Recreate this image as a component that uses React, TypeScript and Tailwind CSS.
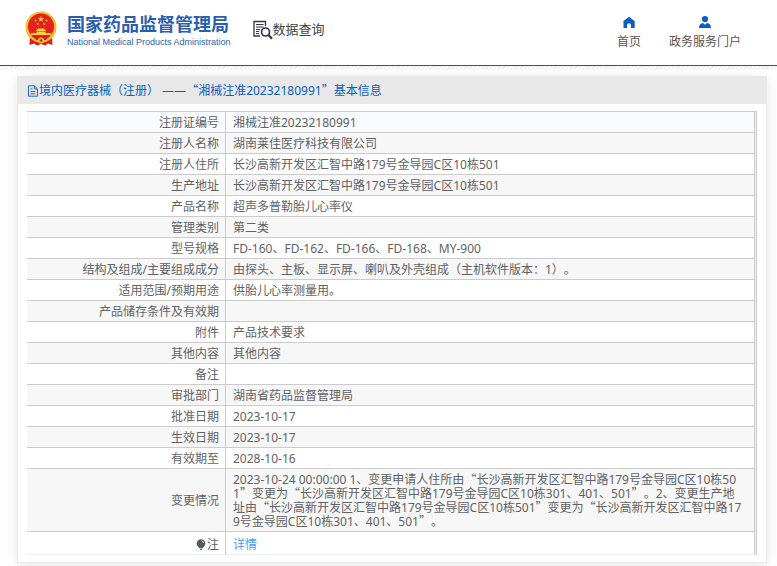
import type { ReactNode } from 'react';

interface InfoRow {
  label: string;
  value: string;
}

const rows: InfoRow[] = [
  { label: '注册证编号', value: '湘械注准20232180991' },
  { label: '注册人名称', value: '湖南莱佳医疗科技有限公司' },
  { label: '注册人住所', value: '长沙高新开发区汇智中路179号金导园C区10栋501' },
  { label: '生产地址', value: '长沙高新开发区汇智中路179号金导园C区10栋501' },
  { label: '产品名称', value: '超声多普勒胎儿心率仪' },
  { label: '管理类别', value: '第二类' },
  { label: '型号规格', value: 'FD-160、FD-162、FD-166、FD-168、MY-900' },
  { label: '结构及组成/主要组成成分', value: '由探头、主板、显示屏、喇叭及外壳组成（主机软件版本：1）。' },
  { label: '适用范围/预期用途', value: '供胎儿心率测量用。' },
  { label: '产品储存条件及有效期', value: '' },
  { label: '附件', value: '产品技术要求' },
  { label: '其他内容', value: '其他内容' },
  { label: '备注', value: '' },
  { label: '审批部门', value: '湖南省药品监督管理局' },
  { label: '批准日期', value: '2023-10-17' },
  { label: '生效日期', value: '2023-10-17' },
  { label: '有效期至', value: '2028-10-16' },
  {
    label: '变更情况',
    value:
      '2023-10-24 00:00:00 1、变更申请人住所由“长沙高新开发区汇智中路179号金导园C区10栋501”变更为“长沙高新开发区汇智中路179号金导园C区10栋301、401、501”。2、变更生产地址由“长沙高新开发区汇智中路179号金导园C区10栋501”变更为“长沙高新开发区汇智中路179号金导园C区10栋301、401、501”。',
  },
];

// Curly quotes are full width in Chinese text
function CjkText({ text }: { text: string }) {
  return (
    <>
      {text.split(/([“”]+)/).map((part, index) =>
        index % 2 === 1 ? (
          <span key={index} className="font-['Noto_Sans_CJK_SC',sans-serif] leading-[10px]">
            {part}
          </span>
        ) : (
          part
        )
      )}
    </>
  );
}

function Emblem() {
  return (
    <svg viewBox="0 0 32 35" className="h-[35px] w-8 shrink-0" aria-hidden="true">
      <path d="M5 24 L4.500 34 L9 32.500 L12 34.500 L16 33 L20 34.500 L23 32.500 L27.500 34 L27 24 Z" fill="#d8201c" />
      <circle cx="16" cy="16" r="15.500" fill="#edb52c" />
      <circle cx="16" cy="15.500" r="14.200" fill="none" stroke="#f7d95c" strokeWidth="0.800" strokeDasharray="2 1" />
      <circle cx="16" cy="15.500" r="13" fill="#e5211d" />
      <path d="M16 4.800 L16.800 7.200 H19.300 L17.300 8.700 L18 11.100 L16 9.600 L14 11.100 L14.700 8.700 L12.700 7.200 H15.200 Z" fill="#f8cf3c" />
      <g fill="#f8cf3c">
        <circle cx="10.500" cy="9.500" r="0.900" />
        <circle cx="21.500" cy="9.500" r="0.900" />
        <circle cx="12.700" cy="13" r="0.900" />
        <circle cx="19.300" cy="13" r="0.900" />
        <path d="M12 18.500 L13 17.500 H19 L20 18.500 L21 20 H11 Z" />
        <path d="M11.500 20.500 H20.500 V22 H26 V24 H6 V22 H11.500 Z" />
      </g>
      <path d="M7 25 H25 L22 29 H10 Z" fill="#d8201c" />
      <circle cx="16" cy="29.500" r="3" fill="#f0bd35" />
      <circle cx="16" cy="29.500" r="1.300" fill="#d8201c" />
      <path d="M5 26 Q10 27 12 31 M27 26 Q22 27 20 31" stroke="#f0bd35" strokeWidth="1.200" fill="none" />
    </svg>
  );
}

function QueryIcon() {
  return (
    <svg viewBox="0 0 20 20" className="h-5 w-5 shrink-0" fill="none" stroke="#33334a" aria-hidden="true">
      <path d="M12.500 6 V1.500 H1 V16 H7" strokeWidth="1.300" />
      <path d="M3 4.500 H10.500 M3 7 H10.500 M3 9.500 H7 M3 11.500 H6 M3 13.500 H6" strokeWidth="1" />
      <circle cx="12.500" cy="12" r="4" strokeWidth="1.700" />
      <path d="M15.500 15 L19 18.700" strokeWidth="2.200" />
    </svg>
  );
}

function HomeIcon() {
  return (
    <svg viewBox="0 0 12 12" className="h-3 w-3" fill="#0a5fc4" aria-hidden="true">
      <path d="M6 0.800 L11.500 5 Q12 5.500 11.700 6 V12 H8 V9 Q8 7.200 6 7.200 Q4 7.200 4 9 V12 H0.500 V6 Q0 5.500 0.500 5 Z" />
    </svg>
  );
}

function UserIcon() {
  return (
    <svg viewBox="0 0 12 12" className="h-3 w-3" fill="#0a5fc4" aria-hidden="true">
      <circle cx="6" cy="3.100" r="3.100" />
      <path d="M0 12 Q0 7.500 4 7.100 L6 8.700 L8 7.100 Q12 7.500 12 12 Z" />
    </svg>
  );
}

function DocumentIcon() {
  return (
    <svg viewBox="0 0 12 12" className="h-3 w-3 shrink-0" fill="none" stroke="#0a5fc4" strokeWidth="0.900" aria-hidden="true">
      <path d="M1.500 0.800 H7.300 L10.500 4 V11.200 H1.500 Z M7.300 0.800 V4 H10.500 M3.500 4 H5.500 M3.500 6.500 H8.500 M3.500 8.800 H8.500" />
    </svg>
  );
}

function BulbIcon() {
  return (
    <svg viewBox="0 0 10 12" className="h-3 w-2.5" aria-hidden="true">
      <circle cx="5" cy="4.500" r="4.300" fill="#55585c" />
      <path d="M2 7 H8 L6.800 9.200 H3.200 Z M4 10 H6 V11 H4 Z" fill="#55585c" />
      <path d="M5.500 1.800 Q7.300 2.200 7.700 4" stroke="#fff" strokeWidth="0.800" fill="none" />
    </svg>
  );
}

function NavLink({ icon, text }: { icon: ReactNode; text: string }) {
  return (
    <a href="#" className="flex flex-col items-center gap-[5px] text-xs leading-[18px] text-[#555]">
      {icon}
      {text}
    </a>
  );
}

export default function App() {
  return (
    <div
      lang="zh-CN"
      className="bg-white font-['Noto_Sans','Noto_Sans_CJK_SC',sans-serif] text-xs text-[#606266] [text-spacing-trim:space-all]"
    >
      {/* Header */}
      <header>
        <div className="flex h-[66px] items-start justify-between border-b border-[#1059ad] pr-9 pl-[25px]">
          <div className="flex">
            <a href="#" className="flex gap-[10px] pt-[11px]">
              <Emblem />
              <span className="flex flex-col text-[#2b5fae]">
                <span className="font-['Noto_Sans_CJK_SC',sans-serif] text-lg leading-[25px] font-bold">
                  国家药品监督管理局
                </span>
                <span className="font-['Liberation_Sans',sans-serif] text-[9px] leading-3">
                  National Medical Products Administration
                </span>
              </span>
            </a>
            <a href="#" className="ml-[22px] flex pt-5 text-[13px] leading-[18px] text-[#444]">
              <QueryIcon />
              {'数据查询'}
            </a>
          </div>
          <nav className="flex gap-7 pt-4">
            <NavLink icon={<HomeIcon />} text="首页" />
            <NavLink icon={<UserIcon />} text="政务服务门户" />
          </nav>
        </div>
        <div className="h-[3px] bg-[repeating-linear-gradient(135deg,#ebe8e8_0px,#ebe8e8_1px,#ffffff_1px,#ffffff_3px)]" />
      </header>

      {/* Registration details */}
      <main className="mt-[7px] mr-[10px] mb-1 ml-[17px] border border-[#e8e8ea] bg-white shadow-[0_2px_12px_rgba(0,0,0,0.1)]">
        <h1 className="flex h-[27px] items-center bg-[#e8e8e8] pl-[9px] text-xs text-[#0a5fc4]">
          <DocumentIcon />
          <span>
            <CjkText text="境内医疗器械（注册） ——“湘械注准20232180991”基本信息" />
          </span>
        </h1>
        <div className="px-[9px] pt-[7px] pb-[7px]">
          <div className="border-t border-r border-[#ccc] bg-[#ebeef5] pr-px">
            <table className="w-full table-fixed border-separate border-spacing-0 leading-[14px]">
              <colgroup>
                <col className="w-[199px]" />
                <col />
              </colgroup>
              <tbody>
                {rows.map((row, index) => (
                  <tr
                    key={row.label}
                    className={index === 0 ? 'bg-[#f8fafd]' : index % 2 === 1 ? 'bg-[#f7f7f7]' : 'bg-white'}
                  >
                    <th scope="row" className="border-r border-b border-[#ccc] px-[6px] pt-1 pb-[2px] text-right font-normal">
                      {row.label}
                    </th>
                    <td className="h-[21px] border-r border-b border-[#ccc] pt-1 pr-[11px] pb-[2px] pl-[7px] break-all">
                      <CjkText text={row.value} />
                    </td>
                  </tr>
                ))}
                <tr className="bg-white">
                  <th scope="row" className="border-r border-b border-r-[#ccc] border-b-[#ebeef5] px-[6px] pt-[6px] pb-[2px] text-right font-normal">
                    <span className="flex items-center justify-end gap-px">
                      <BulbIcon />
                      注
                    </span>
                  </th>
                  <td className="h-[23px] border-r border-b border-r-[#ccc] border-b-[#ebeef5] pt-[6px] pr-[11px] pb-[2px] pl-[7px]">
                    <a href="#" className="text-[#409eff]">
                      详情
                    </a>
                  </td>
                </tr>
              </tbody>
            </table>
          </div>
        </div>
      </main>
    </div>
  );
}
